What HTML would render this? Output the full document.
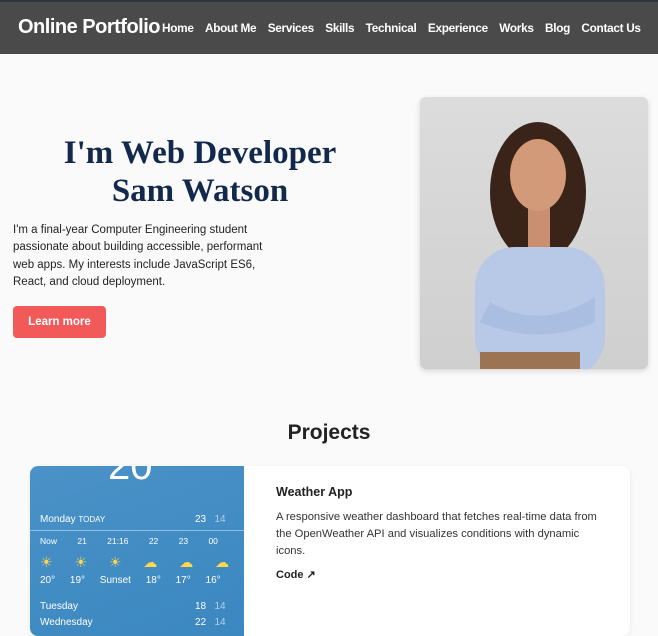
<!DOCTYPE html>
<html><head><meta charset="utf-8"><style>
*{margin:0;padding:0;box-sizing:border-box}
body{width:658px;height:626px;overflow:hidden;background:#fafafa;font-family:"Liberation Sans",sans-serif;color:#222;position:relative}
nav{position:absolute;left:0;top:0;width:658px;height:54px;background:#4a4a4a;border-top:2px solid #2f3440}
.logo{position:absolute;left:18px;top:14px;color:#fff;font-size:20px;font-weight:bold;letter-spacing:-0.5px}
.links{position:absolute;top:19px;left:162px;color:#fff;font-weight:bold;font-size:11.8px;white-space:nowrap;letter-spacing:-0.3px}
.links span{margin-right:11.4px}
h1{position:absolute;left:20px;width:360px;top:134px;text-align:center;font-family:"Liberation Serif",serif;font-weight:bold;color:#13294b;font-size:33px;line-height:38px}
.p{position:absolute;left:13px;top:222px;width:258px;font-size:11.5px;line-height:17.3px;color:#222}
.btn{position:absolute;left:13px;top:306px;width:93px;height:32px;background:#f25a5a;color:#fff;font-size:11.5px;font-weight:bold;border-radius:4px;text-align:center;line-height:32px}
.photo{position:absolute;left:420px;top:97px;width:228px;height:272px;border-radius:6px;background:linear-gradient(#dcdcdc,#cfcfcf);overflow:hidden;box-shadow:0 2px 6px rgba(0,0,0,.15)}
h2{position:absolute;top:421px;width:658px;text-align:center;font-size:21px;font-weight:bold;color:#222}
.card{position:absolute;left:30px;top:466px;width:600px;height:170px;background:#fff;border-radius:8px;box-shadow:0 1px 4px rgba(0,0,0,.08);overflow:hidden}
.wx{position:absolute;left:0;top:0;width:214px;height:170px;background:linear-gradient(160deg,#4a92c8,#3b87c0);color:#fff;font-size:10px}
.ct{position:absolute;left:276px;top:485px;font-size:12.5px;font-weight:bold}
.cd{position:absolute;left:276px;top:509px;width:335px;font-size:11.2px;line-height:17px;color:#333}
.cl{position:absolute;left:276px;top:568px;font-size:11px;font-weight:bold}
</style></head><body>
<nav><div class="logo">Online Portfolio</div><div class="links"><span>Home</span><span>About Me</span><span>Services</span><span>Skills</span><span>Technical</span><span>Experience</span><span>Works</span><span>Blog</span><span>Contact Us</span></div></nav>
<h1>I'm Web Developer<br>Sam Watson</h1>
<div class="p">I'm a final-year Computer Engineering student passionate about building accessible, performant web apps. My interests include JavaScript ES6, React, and cloud deployment.</div>
<div class="btn">Learn more</div>
<div class="photo"><svg width="228" height="272">
<ellipse cx="118" cy="95" rx="48" ry="70" fill="#3a2318"/>
<rect x="55" y="150" width="130" height="130" rx="40" fill="#b7c9e6"/>
<rect x="108" y="110" width="22" height="40" fill="#c98f6e"/>
<ellipse cx="118" cy="78" rx="28" ry="36" fill="#d29a78"/>
<path d="M70 205 Q120 235 175 200 L175 225 Q120 250 60 225Z" fill="#a9bee0"/>
<rect x="60" y="255" width="100" height="20" fill="#9c7454"/>
</svg></div>
<h2>Projects</h2>
<div class="card"><div class="wx">
<div style="position:absolute;left:78px;top:-22px;font-size:40px;font-weight:100">20</div>
<div style="position:absolute;left:10px;top:48px">Monday <span style="font-size:8px">TODAY</span></div>
<div style="position:absolute;left:165px;top:48px">23 &nbsp; <span style="opacity:.6">14</span></div>
<div style="position:absolute;left:0;top:64px;width:214px;border-top:1px solid #8ec0e6"></div>
<div style="position:absolute;left:10px;top:70px;font-size:8.5px;word-spacing:18px">Now 21 21:16 22 23 00</div>
<div style="position:absolute;left:10px;top:88px;font-size:14px;color:#ffd84a;word-spacing:18px">☀ ☀ ☀ ☁ ☁ ☁</div>
<div style="position:absolute;left:10px;top:109px;word-spacing:12px">20° 19° Sunset 18° 17° 16°</div>
<div style="position:absolute;left:10px;top:135px">Tuesday</div><div style="position:absolute;left:165px;top:135px">18 &nbsp; <span style="opacity:.6">14</span></div>
<div style="position:absolute;left:10px;top:151px">Wednesday</div><div style="position:absolute;left:165px;top:151px">22 &nbsp; <span style="opacity:.6">14</span></div>
</div></div>
<div class="ct">Weather App</div>
<div class="cd">A responsive weather dashboard that fetches real-time data from the OpenWeather API and visualizes conditions with dynamic icons.</div>
<div class="cl">Code ↗</div>
</body></html>
